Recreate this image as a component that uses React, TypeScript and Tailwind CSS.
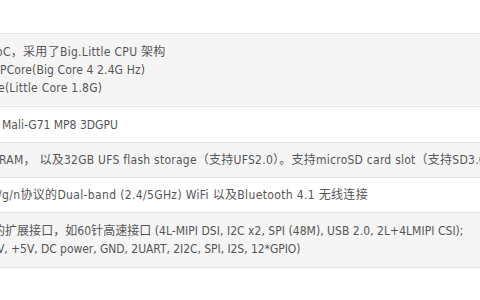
import React from 'react';

type Line = { text: string; shift: string };

const rows: { bg: string; pad: string; lines: Line[] }[] = [
  {
    bg: 'bg-[#f5f5f5]',
    pad: 'py-[9px]',
    lines: [
      { text: 'oC，采用了Big.Little CPU 架构', shift: '-ml-[4px] tracking-[0.3px]' },
      { text: 'PCore(Big Core 4 2.4G Hz)', shift: 'ml-0 tracking-[0.12px]' },
      { text: 'e(Little Core 1.8G)', shift: '-ml-[2px] tracking-[0.25px]' },
    ],
  },
  {
    bg: 'bg-white',
    pad: 'pt-[9px] pb-[8px]',
    lines: [{ text: 'Mali-G71 MP8 3DGPU', shift: 'ml-[2px]' }],
  },
  {
    bg: 'bg-[#f5f5f5]',
    pad: 'py-[8px]',
    lines: [
      {
        text: 'RAM， 以及32GB UFS flash storage（支持UFS2.0）。支持microSD card slot（支持SD3.0）',
        shift: '-ml-[1px] tracking-[0.25px]',
      },
    ],
  },
  {
    bg: 'bg-white',
    pad: 'py-[8px]',
    lines: [
      {
        text: '/g/n协议的Dual-band (2.4/5GHz) WiFi 以及Bluetooth 4.1 无线连接',
        shift: '-ml-[2px] tracking-[0.35px]',
      },
    ],
  },
  {
    bg: 'bg-[#f5f5f5]',
    pad: 'py-[9px]',
    lines: [
      {
        text: '的扩展接口，如60针高速接口 (4L-MIPI DSI, I2C x2, SPI (48M), USB 2.0, 2L+4LMIPI CSI);',
        shift: '-ml-[7px] tracking-[0.04px]',
      },
      {
        text: 'V, +5V, DC power, GND, 2UART, 2I2C, SPI, I2S, 12*GPIO)',
        shift: '-ml-[3px] tracking-[-0.05px]',
      },
    ],
  },
];

const App = () => {
  return (
    <div
      className="w-[480px] h-[300px] overflow-hidden bg-white text-[12px] text-[#555] font-stretch-condensed"
      style={{ fontFamily: '"DejaVu Sans Condensed", "DejaVu Sans", "Noto Sans CJK SC", sans-serif' }}
    >
      <div className="h-[33px]" />
      <div className="border-b border-[#e6e6e6]">
        {rows.map((row, i) => (
          <div key={i} className={`${row.bg} ${row.pad} border-t border-[#e6e6e6]`}>
            {row.lines.map((line, j) => (
              <div key={j} className={`${line.shift} whitespace-nowrap leading-[18px]`}>
                {line.text}
              </div>
            ))}
          </div>
        ))}
      </div>
    </div>
  );
};

export default App;
